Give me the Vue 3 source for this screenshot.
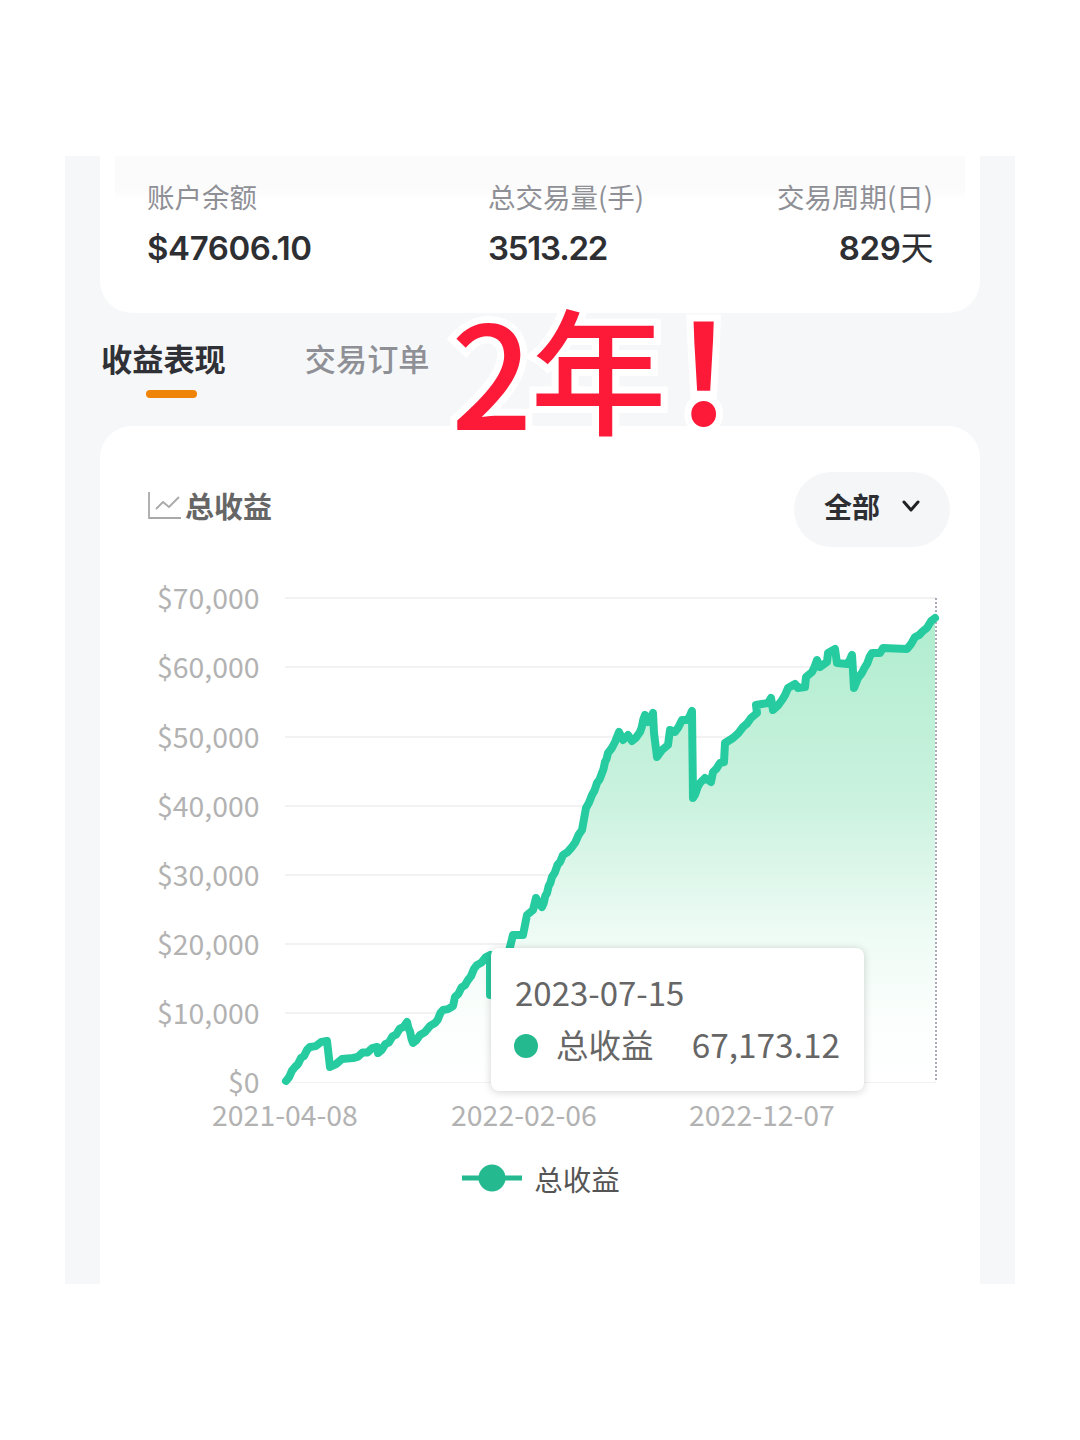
<script setup>
import { computed } from 'vue'

const stats = [
  { label: '账户余额', value: '$47606.10' },
  { label: '总交易量(手)', value: '3513.22', tight: true },
  { label: '交易周期(日)', value: '829', unit: '天' }
]

const yLabels = [
  { text: '$70,000', y: 598 },
  { text: '$60,000', y: 667 },
  { text: '$50,000', y: 737 },
  { text: '$40,000', y: 806 },
  { text: '$30,000', y: 875 },
  { text: '$20,000', y: 944 },
  { text: '$10,000', y: 1013 },
  { text: '$0', y: 1082 }
]

const xLabels = [
  { text: '2021-04-08', x: 285 },
  { text: '2022-02-06', x: 524 },
  { text: '2022-12-07', x: 762 }
]

// traced from the curve, same coordinates as the svg viewBox
const points = [
  [286, 1081], [295, 1067], [310, 1047], [327, 1041], [330, 1067], [342, 1059], [353, 1058], [377, 1047],
  [378, 1053], [407, 1022], [413, 1043], [420, 1035], [435, 1023], [443, 1010], [453, 1006], [455, 997],
  [468, 980], [477, 965], [490, 955], [490, 995], [497, 985], [505, 960], [510, 947], [513, 935],
  [523, 935], [527, 915], [533, 910], [536, 898], [542, 907], [552, 877], [563, 855], [572, 847],
  [582, 830], [586, 808], [592, 795], [602, 773], [608, 753], [615, 742], [619, 732], [623, 740],
  [628, 735], [632, 741], [640, 732], [645, 715], [648, 722], [653, 713], [654, 733], [657, 757],
  [662, 750], [668, 745], [670, 730], [675, 732], [682, 720], [687, 720], [692, 711], [693, 798],
  [700, 783], [705, 778], [711, 782], [713, 772], [720, 763], [724, 762], [725, 743], [733, 738],
  [743, 727], [751, 718], [757, 713], [756, 705], [768, 703], [771, 698], [773, 710], [782, 700],
  [788, 688], [795, 684], [798, 688], [805, 687], [806, 677], [812, 672], [817, 660], [820, 667],
  [827, 662], [828, 653], [835, 649], [837, 663], [847, 664], [852, 655], [854, 688], [858, 678],
  [865, 667], [872, 653], [880, 653], [883, 648], [907, 649], [915, 637], [923, 631], [935, 618]
]

// the real series has many small steps, so break long slopes up a little
const steppedPoints = computed(() => {
  const out = [points[0]]
  for (let i = 1; i < points.length; i++) {
    const [x0, y0] = points[i - 1]
    const [x1, y1] = points[i]
    const dx = x1 - x0
    const dy = y1 - y0
    // flat stretches stay flat
    const n = Math.abs(dy) > 2 && dx > 4 ? Math.floor(Math.hypot(dx, dy) / 5) : 0
    for (let k = 1; k < n; k++) {
      const wobble = k % 2 ? 1.1 : -1.1
      out.push([+(x0 + (dx * k) / n).toFixed(1), +(y0 + (dy * k) / n + wobble).toFixed(1)])
    }
    out.push(points[i])
  }
  return out
})

const linePath = computed(() => 'M' + steppedPoints.value.map((p) => p.join(' ')).join('L'))
const areaPath = computed(() => linePath.value + 'L935 1082L286 1082Z')
</script>

<template>
  <div class="page">
    <div class="panel">
      <section class="summary">
        <div v-for="item in stats" :key="item.label" class="stat">
          <div class="stat-label">{{ item.label }}</div>
          <div class="stat-value" :class="{ tight: item.tight }">{{ item.value }}<span v-if="item.unit" class="stat-unit">{{ item.unit }}</span></div>
        </div>
      </section>

      <nav class="tabs">
        <div class="tab active">收益表现<i class="tab-bar"></i></div>
        <div class="tab">交易订单</div>
      </nav>

      <section class="chart-card">
        <header class="chart-head">
          <div class="chart-title">
            <svg class="title-icon" width="33" height="27" viewBox="0 0 33 27" fill="none" stroke="#a9a9a9" stroke-width="1.8">
              <path d="M1 0V26H33" />
              <path d="M8 17L15 10L21 15L31 5" />
            </svg>
            <span>总收益</span>
          </div>
          <div class="range-select">
            <span>全部</span>
            <svg width="20" height="14" viewBox="0 0 20 14" fill="none" stroke="#222" stroke-width="3" stroke-linecap="round" stroke-linejoin="round">
              <path d="M3 3L10 11L17 3" />
            </svg>
          </div>
        </header>

        <div class="chart-wrap">
          <svg class="chart" width="880" height="570" viewBox="100 570 880 570">
            <defs>
              <linearGradient id="areaFill" x1="0" y1="0" x2="0" y2="1">
                <stop offset="0" stop-color="#b0edcf" />
                <stop offset="0.4" stop-color="#cbf2df" />
                <stop offset="0.68" stop-color="#eefbf5" />
                <stop offset="0.85" stop-color="#fafefc" />
                <stop offset="1" stop-color="#ffffff" />
              </linearGradient>
            </defs>
            <line v-for="tick in yLabels" :key="tick.text" x1="285" x2="936" :y1="tick.y" :y2="tick.y" stroke="#f2f2f3" stroke-width="2" />
            <path :d="areaPath" fill="url(#areaFill)" />
            <line x1="936" x2="936" y1="598" y2="1082" stroke="#a9abb8" stroke-width="2" stroke-dasharray="2 2" />
            <path :d="linePath" fill="none" stroke="#27cba0" stroke-width="8" stroke-linejoin="round" stroke-linecap="round" />
            <text v-for="tick in yLabels" :key="tick.text" class="axis-text" x="259.5" :y="tick.y + 11" text-anchor="end">{{ tick.text }}</text>
            <text v-for="tick in xLabels" :key="tick.text" class="axis-text" :x="tick.x" y="1126" text-anchor="middle">{{ tick.text }}</text>
          </svg>

          <div class="tooltip">
            <div class="tooltip-date">2023-07-15</div>
            <div class="tooltip-row">
              <i class="tooltip-dot"></i>
              <span class="tooltip-name">总收益</span>
              <span class="tooltip-num">67,173.12</span>
            </div>
          </div>
        </div>

        <div class="legend">
          <svg width="60" height="28" viewBox="0 0 60 28">
            <line x1="0" x2="60" y1="14" y2="14" stroke="#25b98f" stroke-width="5" />
            <circle cx="30" cy="14" r="13.5" fill="#25b98f" />
          </svg>
          <span>总收益</span>
        </div>
      </section>

      <div class="stamp"><span class="stamp-two">2</span><span class="stamp-year">年</span><span class="stamp-mark">!</span></div>
    </div>
  </div>
</template>

<style scoped>
.page {
  width: 1080px;
  height: 1440px;
  box-sizing: border-box;
  padding: 156px 65px;
  background: #fff;
  font-family: "Noto Sans CJK SC", "Noto Sans", sans-serif;
}

.panel {
  position: relative;
  height: 1128px;
  background: #f6f7f9;
  overflow: hidden;
}

.summary {
  display: grid;
  grid-template-columns: 341px 1fr auto;
  height: 157px;
  box-sizing: border-box;
  margin: 0 35px;
  padding: 20px 47px 0;
  border-radius: 0 0 32px 32px;
  background: linear-gradient(#fbfbfc 75%, #fff) no-repeat center top / 850px 44px, #fff;
}

.stat:last-child {
  text-align: right;
}

.stat-label {
  font-size: 27.5px;
  line-height: 40px;
  color: #8f9096;
}

.stat-value {
  margin-top: 12px;
  font-family: Inter, "Noto Sans CJK SC", sans-serif;
  font-size: 33px;
  line-height: 40px;
  font-weight: 600;
  letter-spacing: -0.4px;
  color: #2e2f33;
}

.stat-value.tight {
  letter-spacing: -1.2px;
}

.stat-unit {
  font-family: "Noto Sans CJK SC", sans-serif;
  font-weight: 400;
  line-height: 0;
}

.tabs {
  display: flex;
  gap: 79px;
  height: 113px;
  padding: 23px 0 0 36px;
  box-sizing: border-box;
}

.tab {
  position: relative;
  font-size: 31.2px;
  line-height: 44px;
  color: #8f9096;
  font-weight: 500;
}

.tab.active {
  color: #303136;
  font-weight: 700;
}

.tab-bar {
  position: absolute;
  left: 45px;
  top: 54px;
  width: 51px;
  height: 8px;
  border-radius: 4px;
  background: #f08408;
}

.chart-card {
  height: 858px;
  margin: 0 35px;
  border-radius: 32px 32px 0 0;
  background: #fff;
}

.chart-head {
  display: flex;
  align-items: center;
  justify-content: space-between;
  padding: 46px 30px 0 48px;
}

.chart-title {
  display: flex;
  align-items: center;
  gap: 4px;
  padding-bottom: 9px;
  font-size: 29px;
  font-weight: 700;
  color: #666;
}

.range-select {
  display: flex;
  align-items: center;
  gap: 21px;
  width: 156px;
  height: 75px;
  box-sizing: border-box;
  padding: 0 0 8px 30px;
  border-radius: 38px;
  background: #f5f6f8;
  font-size: 28px;
  font-weight: 700;
  color: #2e2f33;
}

.chart-wrap {
  position: relative;
  margin-top: 23px;
  height: 570px;
}

.chart {
  display: block;
}

.axis-text {
  font-size: 28.4px;
  fill: #b2b2b2;
}

.tooltip {
  position: absolute;
  left: 391px;
  top: 378px;
  width: 373px;
  height: 143px;
  box-sizing: border-box;
  padding: 22px 24px 0;
  border-radius: 8px;
  background: #fff;
  box-shadow: 0 1px 8px rgba(0, 0, 0, 0.18);
  color: #666;
}

.tooltip-date {
  font-size: 33px;
  line-height: 44px;
}

.tooltip-row {
  display: flex;
  align-items: center;
  margin-top: 8px;
  font-size: 32.5px;
  line-height: 44px;
}

.tooltip-dot {
  width: 24px;
  height: 24px;
  margin: 3px 0 0 -1px;
  border-radius: 50%;
  background: #25b98f;
}

.tooltip-name {
  margin-left: 18px;
}

.tooltip-num {
  margin-left: auto;
  font-size: 33.4px;
}

.legend {
  display: flex;
  align-items: center;
  justify-content: center;
  gap: 12px;
  margin-top: 18px;
  height: 40px;
  padding-left: 2px;
  font-size: 28.5px;
  color: #555;
}

.stamp {
  position: absolute;
  left: 386px;
  top: 120px;
  font-size: 143px;
  line-height: 180px;
  font-weight: 500;
  color: #fd1a38;
  white-space: nowrap;
  -webkit-text-stroke: 14px #fff;
  paint-order: stroke fill;
}

.stamp-year {
  margin-left: -2px;
  font-size: 136px;
  vertical-align: 5px;
}

.stamp-mark {
  margin-left: 12px;
  font-size: 136px;
  font-weight: 700;
  vertical-align: 5px;
}
</style>
